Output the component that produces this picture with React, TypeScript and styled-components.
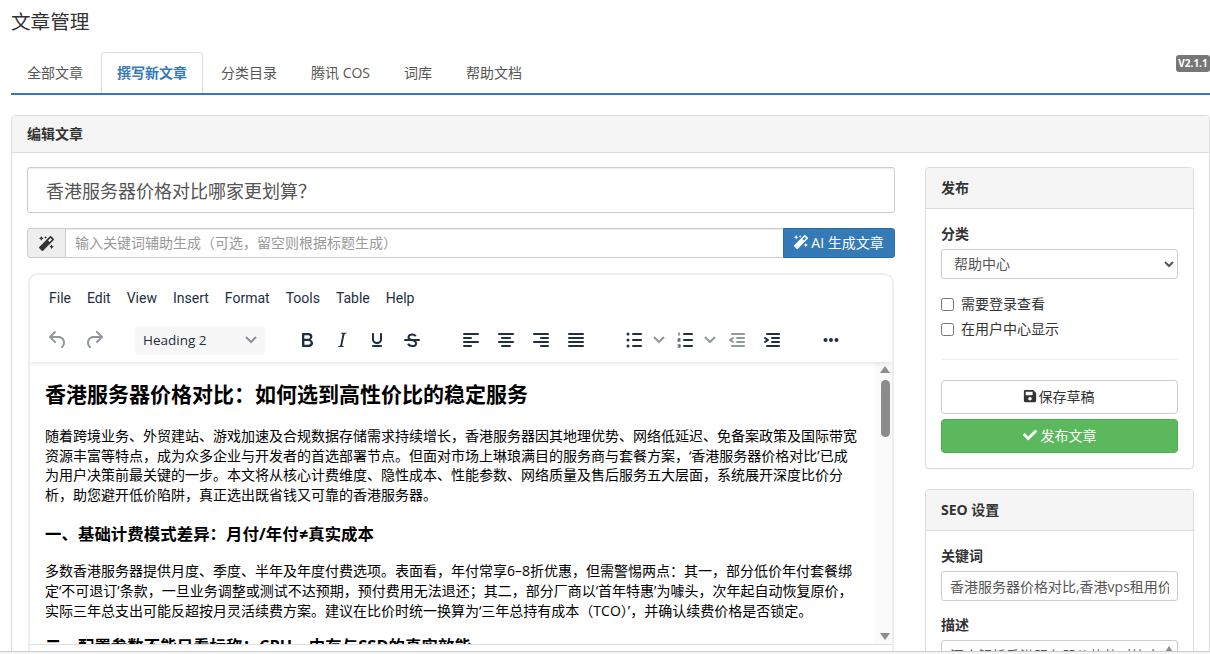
import React from "react";
import styled, { createGlobalStyle } from "styled-components";
import { FaMagic, FaSave, FaCheck } from "react-icons/fa";

const GlobalStyle = createGlobalStyle`
  html, body {
    margin: 0;
    height: 100%;
    overflow: hidden;
    background: #fff;
  }
  body, input, select, textarea, button {
    font-family: "Open Sans", "Noto Sans CJK SC", sans-serif;
    font-size: 14px;
    color: #333;
  }
  * {
    box-sizing: border-box;
  }
`;

const Page = styled.div`
  position: relative;
  height: 654px;
  overflow: hidden;
  padding-left: 11px;
`;

const Title = styled.h1`
  margin: 0;
  height: 52px;
  padding-top: 8px;
  font-size: 19.6px;
  font-weight: 400;
  line-height: 28px;
`;

const Tabs = styled.ul`
  position: relative;
  display: flex;
  gap: 2px;
  height: 43px;
  margin: 0;
  padding: 0;
  list-style: none;
  border-bottom: 2px solid #337ab7;
`;

const Tab = styled.li<{ $active?: boolean }>`
  height: 41px;
  padding: 10px 15px;
  line-height: 20px;
  border: 1px solid ${(p) => (p.$active ? "#ddd" : "transparent")};
  border-bottom: 0;
  border-radius: 4px 4px 0 0;
  color: ${(p) => (p.$active ? "#337ab7" : "#555")};
  font-weight: ${(p) => (p.$active ? 700 : 400)};
`;

const VersionBadge = styled.span`
  position: absolute;
  top: 3px;
  right: 0;
  height: 17px;
  width: 34px;
  border-radius: 3px;
  background: #777;
  color: #fff;
  font-size: 10px;
  font-weight: 700;
  line-height: 17px;
  text-align: center;
`;

const Panel = styled.section`
  border: 1px solid #ddd;
  border-radius: 4px;
  background: #fff;
  box-shadow: 0 1px 1px rgba(0, 0, 0, 0.05);
`;

const MainPanel = styled(Panel)`
  margin-top: 20px;
`;

const PanelHeading = styled.div<{ $bold?: boolean }>`
  padding: ${(p) => (p.$bold ? "8px 15px" : "10px 15px")};
  background: #f5f5f5;
  border-bottom: 1px solid #ddd;
  border-radius: 3px 3px 0 0;
  font-weight: 700;
  line-height: 20px;
`;

const Columns = styled.div`
  display: grid;
  grid-template-columns: 868px 269px;
  gap: 30px;
  padding: 14px 15px 15px;
`;

const MainColumn = styled.div`
  min-width: 0;
`;

const TitleInput = styled.input`
  display: block;
  width: 100%;
  height: 46px;
  padding: 10px 18px;
  border: 1px solid #ccc;
  border-radius: 3px;
  font-size: 18px;
  color: #555;
  box-shadow: inset 0 1px 1px rgba(0, 0, 0, 0.075);
`;

const InputGroup = styled.div`
  display: flex;
  height: 30px;
  margin-top: 15px;
`;

const GroupAddon = styled.span`
  display: flex;
  align-items: center;
  justify-content: center;
  width: 39px;
  background: #eee;
  border: 1px solid #ccc;
  border-radius: 3px 0 0 3px;
  font-size: 15px;
  color: #333;
`;

const GroupInput = styled.input`
  flex: 1;
  min-width: 0;
  padding: 4px 9px 6px;
  border: 1px solid #ccc;
  border-left: 0;
  border-right: 0;
  box-shadow: inset 0 1px 1px rgba(0, 0, 0, 0.075);
  &::placeholder {
    color: #999;
    opacity: 1;
  }
`;

const GenerateButton = styled.button`
  display: flex;
  align-items: center;
  justify-content: center;
  gap: 3px;
  width: 112px;
  padding: 0 0 2px;
  border: 1px solid #2e6da4;
  border-radius: 0 3px 3px 0;
  background: #337ab7;
  color: #fff;
`;

const Editor = styled.div`
  display: flex;
  flex-direction: column;
  height: 420px;
  margin: 15px 1px 0;
  border: 2px solid #eee;
  border-radius: 10px;
  overflow: hidden;
`;

const EditorHeader = styled.div`
  position: relative;
  z-index: 1;
  height: 87px;
  flex: none;
  background: #fff;
  box-shadow: 0 2px 4px rgba(34, 47, 62, 0.1);
`;

const MenuBar = styled.div`
  display: flex;
  gap: 16px;
  height: 41px;
  padding: 13px 0 0 19px;
  font-family: Roboto, sans-serif;
  line-height: 20px;
  color: #222f3e;
`;

const ToolBar = styled.div`
  display: flex;
  align-items: center;
  height: 34px;
  margin-top: 7px;
  padding-left: 10px;
`;

const ToolGroup = styled.div<{ $offset?: number }>`
  display: flex;
  align-items: center;
  margin-left: ${(p) => p.$offset ?? 24}px;
  &:first-child {
    margin-left: 0;
  }
`;

const ToolButton = styled.span<{ $muted?: boolean; $wide?: boolean }>`
  display: flex;
  align-items: center;
  justify-content: center;
  width: ${(p) => (p.$wide ? 36 : 35)}px;
  height: 34px;
  color: ${(p) => (p.$muted ? "rgba(34, 47, 62, 0.5)" : "#222f3e")};
`;

const SplitButton = styled.span`
  display: flex;
  align-items: center;
  gap: 6px;
  width: 51px;
  height: 34px;
  padding-left: 5px;
  color: #222f3e;
`;

const Icon = styled.svg`
  display: block;
  width: 24px;
  height: 24px;
  fill: currentColor;
`;

const Chevron = styled.svg`
  display: block;
  width: 14px;
  height: 10px;
  fill: none;
  stroke: rgba(34, 47, 62, 0.5);
  stroke-width: 2;
`;

const BlockSelect = styled.span`
  display: flex;
  align-items: center;
  justify-content: space-between;
  width: 130px;
  height: 29px;
  padding: 0 7px 0 8px;
  border-radius: 3px;
  background: #f7f7f7;
  color: #222f3e;
  font-size: 13.5px;
`;

const EditorBody = styled.div`
  display: flex;
  height: 283px;
  flex: none;
  border-bottom: 1px solid #e0e0e0;
`;

const Content = styled.div`
  flex: 1;
  min-width: 0;
  overflow: hidden;
  padding: 18px 15px 0;
  color: #000;
  line-height: 1.4;
`;

const ContentTitle = styled.h1`
  margin: 0 0 17px;
  font-size: 21px;
  font-weight: 700;
  line-height: 29px;
`;

const ContentHeading = styled.h3`
  margin: 0 0 15px;
  font-size: 16.38px;
  font-weight: 700;
  letter-spacing: 0.1px;
  line-height: 23px;
`;

const Paragraph = styled.p<{ $gap: number }>`
  margin: 0 0 ${(p) => p.$gap}px;
`;

const ScrollTrack = styled.div`
  display: flex;
  flex-direction: column;
  align-items: center;
  flex: none;
  width: 17px;
  background: #fafafa;
  padding: 4px 0 4px 3px;
`;

const ScrollThumb = styled.div`
  width: 9px;
  height: 57px;
  margin-top: 7px;
  border-radius: 5px;
  background: #8c8c8c;
`;

const ScrollArrow = styled.span<{ $down?: boolean }>`
  width: 0;
  height: 0;
  border-left: 5px solid transparent;
  border-right: 5px solid transparent;
  border-${(p) => (p.$down ? "top" : "bottom")}: 7px solid #8c8c8c;
  margin-top: ${(p) => (p.$down ? "auto" : "0")};
`;

const SideColumn = styled.aside`
  display: flex;
  flex-direction: column;
  gap: 20px;
`;

const PanelBody = styled.div`
  padding: 15px;
`;

const FieldLabel = styled.label`
  display: block;
  margin-bottom: 5px;
  font-weight: 700;
  line-height: 20px;
`;

const CategorySelect = styled.select`
  display: block;
  width: 100%;
  height: 30px;
  padding: 3px 8px 5px;
  border: 1px solid #ccc;
  border-radius: 3px;
  background: #fff;
  color: #555;
`;

const CheckRow = styled.label`
  display: flex;
  align-items: center;
  gap: 7px;
  height: 20px;
  margin-top: 5px;
  line-height: 20px;
  color: #333;
  & input {
    width: 13px;
    height: 13px;
    margin: 0;
  }
`;

const CheckList = styled.div`
  margin-top: 15px;
`;

const Divider = styled.hr`
  margin: 20px 0;
  border: 0;
  border-top: 1px solid #eee;
`;

const WideButton = styled.button<{ $primary?: boolean }>`
  display: flex;
  align-items: center;
  justify-content: center;
  gap: ${(p) => (p.$primary ? 4 : 2)}px;
  width: 100%;
  height: 34px;
  padding: 0 ${(p) => (p.$primary ? 0 : 2)}px 2px 0;
  border: 1px solid ${(p) => (p.$primary ? "#4cae4c" : "#ccc")};
  border-radius: 4px;
  background: ${(p) => (p.$primary ? "#5cb85c" : "#fff")};
  color: ${(p) => (p.$primary ? "#fff" : "#333")};
  & + & {
    margin-top: 5px;
  }
`;

const TextField = styled.input`
  display: block;
  width: 100%;
  height: 30px;
  margin-bottom: 14px;
  padding: 5px 8px;
  border: 1px solid #ccc;
  border-radius: 3px;
  color: #555;
`;

const DescriptionBox = styled.div`
  position: relative;
`;

const DescriptionField = styled.textarea`
  display: block;
  width: 100%;
  height: 100px;
  padding: 5px 8px;
  border: 1px solid #ccc;
  border-radius: 3px;
  color: #555;
  line-height: 20px;
  overflow: hidden;
  resize: none;
`;

const DescriptionArrow = styled.span`
  position: absolute;
  top: 6px;
  right: 5px;
  border-left: 4px solid transparent;
  border-right: 4px solid transparent;
  border-bottom: 6px solid #8c8c8c;
`;

const BottomEdge = styled.div`
  position: absolute;
  left: 0;
  right: 0;
  bottom: 0;
  height: 3px;
  background: #f5f5f5;
  border-top: 1px solid #ccc;
`;

const bars = (rows: [number, number][]) =>
  rows.map(([x, w], i) => <rect key={i} x={x} y={5 + i * 4} width={w} height={2} rx={1} />);

const ToolIcon: React.FC<{ d?: string; children?: React.ReactNode }> = ({ d, children }) => (
  <Icon viewBox="0 0 24 24">
    {d && <path d={d} />}
    {children}
  </Icon>
);

const Down: React.FC = () => (
  <Chevron viewBox="0 0 14 10">
    <path d="M2 2l5 5 5-5" />
  </Chevron>
);

const tabs = ["全部文章", "撰写新文章", "分类目录", "腾讯 COS", "词库", "帮助文档"];
const menus = ["File", "Edit", "View", "Insert", "Format", "Tools", "Table", "Help"];

const UNDO =
  "M6.4 8H12c3.7 0 6.2 2 6.8 5.1.6 2.7-.4 5.6-2.3 6.8a1 1 0 0 1-1-1.8c1.1-.6 1.8-2.7 1.4-4.6-.5-2.1-2.1-3.5-4.9-3.5H6.4l3.3 3.3a1 1 0 1 1-1.4 1.4l-5-5a1 1 0 0 1 0-1.4l5-5a1 1 0 0 1 1.4 1.4L6.4 8Z";
const REDO =
  "M17.6 10H12c-2.8 0-4.4 1.4-4.9 3.5-.4 2 .3 4 1.4 4.6a1 1 0 1 1-1 1.8c-2-1.2-2.9-4.1-2.3-6.8.6-3 3-5.1 6.8-5.1h5.6l-3.3-3.3a1 1 0 1 1 1.4-1.4l5 5a1 1 0 0 1 0 1.4l-5 5a1 1 0 0 1-1.4-1.4l3.3-3.3Z";
const BOLD =
  "M7.8 19c-.3 0-.5 0-.6-.2l-.2-.5V5.7c0-.2 0-.4.2-.5l.6-.2h5c1.5 0 2.7.3 3.5 1 .7.6 1.1 1.4 1.1 2.5a3 3 0 0 1-.6 1.9c-.4.6-1 1-1.6 1.2.4.1.9.3 1.3.6s.8.7 1 1.2c.4.4.5 1 .5 1.6 0 1.3-.4 2.3-1.3 3-.8.7-2.1 1-3.8 1H7.8Zm5-8.3c.6 0 1.2-.1 1.6-.5.4-.3.6-.7.6-1.3 0-1.1-.8-1.7-2.3-1.7H9.3v3.5h3.4Zm.5 6c.7 0 1.3-.1 1.7-.4.4-.4.6-.9.6-1.5s-.2-1-.7-1.4c-.4-.3-1-.4-2-.4H9.4v3.8h4Z";
const ITALIC =
  "M16.7 4.7l-.1.9h-.3c-.6 0-1 0-1.4.3-.3.3-.4.6-.5 1.1l-2.1 9.8v.6c0 .5.4.8 1.4.8h.2l-.2.8H8l.2-.8h.2c1.1 0 1.8-.5 2-1.5l2-9.8.1-.5c0-.6-.4-.8-1.4-.8h-.3l.2-.9h5.8Z";
const UNDERLINE =
  "M16 5c.6 0 1 .4 1 1v5.5a4 4 0 0 1-.4 1.8l-1 1.4a5.3 5.3 0 0 1-5.5 1 5 5 0 0 1-1.6-1c-.5-.4-.8-.9-1.1-1.4a4 4 0 0 1-.4-1.8V6c0-.6.4-1 1-1s1 .4 1 1v5.5c0 .3 0 .6.2 1l.6.7a3.3 3.3 0 0 0 2.2.8 3.4 3.4 0 0 0 2.2-.8c.3-.2.4-.5.6-.8l.2-.9V6c0-.6.4-1 1-1ZM8 17h8c.6 0 1 .4 1 1s-.4 1-1 1H8a1 1 0 0 1 0-2Z";
const OUTDENT =
  "M7 5h12c.6 0 1 .4 1 1s-.4 1-1 1H7a1 1 0 1 1 0-2Zm5 4h7c.6 0 1 .4 1 1s-.4 1-1 1h-7a1 1 0 0 1 0-2Zm0 4h7c.6 0 1 .4 1 1s-.4 1-1 1h-7a1 1 0 0 1 0-2Zm-5 4h12a1 1 0 0 1 0 2H7a1 1 0 0 1 0-2Zm1.6-3.8a1 1 0 0 1-1.2 1.6l-3-2a1 1 0 0 1 0-1.6l3-2a1 1 0 0 1 1.2 1.6L6.8 12l1.8 1.2Z";
const INDENT =
  "M7 5h12c.6 0 1 .4 1 1s-.4 1-1 1H7a1 1 0 1 1 0-2Zm5 4h7c.6 0 1 .4 1 1s-.4 1-1 1h-7a1 1 0 0 1 0-2Zm0 4h7c.6 0 1 .4 1 1s-.4 1-1 1h-7a1 1 0 0 1 0-2Zm-5 4h12a1 1 0 0 1 0 2H7a1 1 0 0 1 0-2Zm-2.6-3.8L6.2 12l-1.8-1.2a1 1 0 0 1 1.2-1.6l3 2a1 1 0 0 1 0 1.6l-3 2a1 1 0 1 1-1.2-1.6Z";

const App: React.FC = () => {
  return (
    <Page>
      <GlobalStyle />
      <Title>文章管理</Title>
      <Tabs>
        {tabs.map((t, i) => (
          <Tab key={t} $active={i === 1}>
            {t}
          </Tab>
        ))}
        <VersionBadge>V2.1.1</VersionBadge>
      </Tabs>

      <MainPanel>
        <PanelHeading $bold>编辑文章</PanelHeading>
        <Columns>
          <MainColumn>
            <TitleInput readOnly value="香港服务器价格对比哪家更划算？" />
            <InputGroup>
              <GroupAddon>
                <FaMagic />
              </GroupAddon>
              <GroupInput readOnly placeholder="输入关键词辅助生成（可选，留空则根据标题生成）" />
              <GenerateButton>
                <FaMagic /> AI 生成文章
              </GenerateButton>
            </InputGroup>

            <Editor>
              <EditorHeader>
                <MenuBar>
                  {menus.map((m) => (
                    <span key={m}>{m}</span>
                  ))}
                </MenuBar>
                <ToolBar>
                  <ToolGroup>
                    <ToolButton $muted $wide>
                      <ToolIcon d={UNDO} />
                    </ToolButton>
                    <ToolButton $muted $wide>
                      <ToolIcon d={REDO} />
                    </ToolButton>
                  </ToolGroup>
                  <ToolGroup $offset={23}>
                    <BlockSelect>
                      Heading 2
                      <Down />
                    </BlockSelect>
                  </ToolGroup>
                  <ToolGroup $offset={24}>
                    <ToolButton>
                      <ToolIcon d={BOLD} />
                    </ToolButton>
                    <ToolButton>
                      <ToolIcon d={ITALIC} />
                    </ToolButton>
                    <ToolButton>
                      <ToolIcon d={UNDERLINE} />
                    </ToolButton>
                    <ToolButton>
                      <ToolIcon>
                        <rect x="4" y="11" width="16" height="2" rx="1" />
                        <path
                          d="M15.8 8.2c-.8-1.1-2-1.8-3.6-1.8-2.2 0-3.7 1.2-3.7 3 0 3.2 7.6 2.2 7.6 5.8 0 1.8-1.6 2.9-3.9 2.9-2 0-3.4-.8-4.3-2.2"
                          fill="none"
                          stroke="currentColor"
                          strokeWidth="2"
                        />
                      </ToolIcon>
                    </ToolButton>
                  </ToolGroup>
                  <ToolGroup>
                    <ToolButton>
                      <ToolIcon>{bars([[4, 16], [4, 9], [4, 16], [4, 9]])}</ToolIcon>
                    </ToolButton>
                    <ToolButton>
                      <ToolIcon>{bars([[4, 16], [7, 10], [4, 16], [7, 10]])}</ToolIcon>
                    </ToolButton>
                    <ToolButton>
                      <ToolIcon>{bars([[4, 16], [11, 9], [4, 16], [11, 9]])}</ToolIcon>
                    </ToolButton>
                    <ToolButton>
                      <ToolIcon>{bars([[4, 16], [4, 16], [4, 16], [4, 16]])}</ToolIcon>
                    </ToolButton>
                  </ToolGroup>
                  <ToolGroup>
                    <SplitButton>
                      <ToolIcon>
                        <rect x="10" y="5" width="10" height="2" rx="1" />
                        <rect x="10" y="11" width="10" height="2" rx="1" />
                        <rect x="10" y="17" width="10" height="2" rx="1" />
                        <circle cx="6" cy="6" r="1.5" />
                        <circle cx="6" cy="12" r="1.5" />
                        <circle cx="6" cy="18" r="1.5" />
                      </ToolIcon>
                      <Down />
                    </SplitButton>
                    <SplitButton>
                      <ToolIcon>
                        <rect x="10" y="5" width="10" height="2" rx="1" />
                        <rect x="10" y="11" width="10" height="2" rx="1" />
                        <rect x="10" y="17" width="10" height="2" rx="1" />
                        <path d="M5.5 4.5h1v3h-1zM4.5 10.5h3v1l-2 1h2v1h-3v-1l2-1h-2zM4.5 16.5h3v3h-3v-.7h2v-.5h-1.5v-.6h1.5v-.5h-2z" />
                      </ToolIcon>
                      <Down />
                    </SplitButton>
                    <ToolButton $muted>
                      <ToolIcon d={OUTDENT} />
                    </ToolButton>
                    <ToolButton>
                      <ToolIcon d={INDENT} />
                    </ToolButton>
                  </ToolGroup>
                  <ToolGroup>
                    <ToolButton>
                      <ToolIcon>
                        <circle cx="6.5" cy="12" r="2" />
                        <circle cx="12" cy="12" r="2" />
                        <circle cx="17.5" cy="12" r="2" />
                      </ToolIcon>
                    </ToolButton>
                  </ToolGroup>
                </ToolBar>
              </EditorHeader>
              <EditorBody>
                <Content>
                  <ContentTitle>香港服务器价格对比：如何选到高性价比的稳定服务</ContentTitle>
                  <Paragraph $gap={19}>
                    随着跨境业务、外贸建站、游戏加速及合规数据存储需求持续增长，香港服务器因其地理优势、网络低延迟、免备案政策及国际带宽资源丰富等特点，成为众多企业与开发者的首选部署节点。但面对市场上琳琅满目的服务商与套餐方案，‘香港服务器价格对比’已成为用户决策前最关键的一步。本文将从核心计费维度、隐性成本、性能参数、网络质量及售后服务五大层面，系统展开深度比价分析，助您避开低价陷阱，真正选出既省钱又可靠的香港服务器。
                  </Paragraph>
                  <ContentHeading>一、基础计费模式差异：月付/年付≠真实成本</ContentHeading>
                  <Paragraph $gap={15}>
                    多数香港服务器提供月度、季度、半年及年度付费选项。表面看，年付常享6–8折优惠，但需警惕两点：其一，部分低价年付套餐绑定‘不可退订’条款，一旦业务调整或测试不达预期，预付费用无法退还；其二，部分厂商以‘首年特惠’为噱头，次年起自动恢复原价，实际三年总支出可能反超按月灵活续费方案。建议在比价时统一换算为‘三年总持有成本（TCO）’，并确认续费价格是否锁定。
                  </Paragraph>
                  <ContentHeading>二、配置参数不能只看标称：CPU、内存与SSD的真实效能</ContentHeading>
                </Content>
                <ScrollTrack>
                  <ScrollArrow />
                  <ScrollThumb />
                  <ScrollArrow $down />
                </ScrollTrack>
              </EditorBody>
            </Editor>
          </MainColumn>

          <SideColumn>
            <Panel>
              <PanelHeading>发布</PanelHeading>
              <PanelBody>
                <FieldLabel>分类</FieldLabel>
                <CategorySelect defaultValue="help">
                  <option value="help">帮助中心</option>
                </CategorySelect>
                <CheckList>
                  <CheckRow>
                    <input type="checkbox" />
                    需要登录查看
                  </CheckRow>
                  <CheckRow>
                    <input type="checkbox" />
                    在用户中心显示
                  </CheckRow>
                </CheckList>
                <Divider />
                <WideButton>
                  <FaSave /> 保存草稿
                </WideButton>
                <WideButton $primary>
                  <FaCheck /> 发布文章
                </WideButton>
              </PanelBody>
            </Panel>
            <Panel>
              <PanelHeading>SEO 设置</PanelHeading>
              <PanelBody>
                <FieldLabel>关键词</FieldLabel>
                <TextField readOnly value="香港服务器价格对比,香港vps租用价格,香港云服务器" />
                <FieldLabel>描述</FieldLabel>
                <DescriptionBox>
                  <DescriptionField
                    readOnly
                    value="深度解析香港服务器价格的对比方法与选购要点"
                  />
                  <DescriptionArrow />
                </DescriptionBox>
              </PanelBody>
            </Panel>
          </SideColumn>
        </Columns>
      </MainPanel>
      <BottomEdge />
    </Page>
  );
};

export default App;
